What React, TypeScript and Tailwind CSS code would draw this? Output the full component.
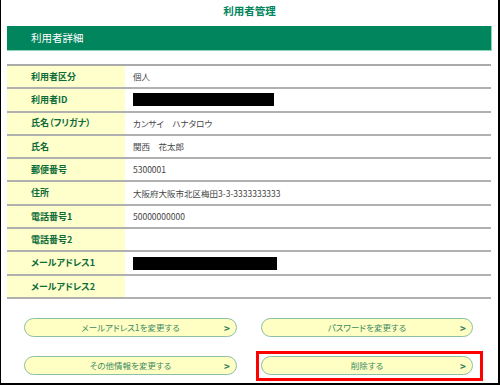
import React from "react";

type Row = { label: string; value?: string; redact?: number };

const rows: Row[] = [
  { label: "利用者区分", value: "個人" },
  { label: "利用者ID", redact: 141 },
  { label: "氏名（フリガナ）", value: "カンサイ　ハナタロウ" },
  { label: "氏名", value: "関西　花太郎" },
  { label: "郵便番号", value: "5300001" },
  { label: "住所", value: "大阪府大阪市北区梅田3-3-3333333333" },
  { label: "電話番号1", value: "50000000000" },
  { label: "電話番号2" },
  { label: "メールアドレス1", redact: 144 },
  { label: "メールアドレス2" },
];

export default function App() {
  return (
    <div
      className="w-[500px] h-[385px] bg-white border-l border-r-2 border-b-2 border-black overflow-hidden [font-feature-settings:'palt']"
      style={{ fontFamily: '"Noto Sans CJK JP", "Noto Sans", sans-serif' }}
    >
      {/* Page title */}
      <div className="h-[22px] flex items-center justify-center text-[10.5px] font-bold text-[#00855c]">
        利用者管理
      </div>

      {/* Section header */}
      <div className="ml-[6px] mt-[4px] w-[485px] h-[25px] bg-[#00855c] border-r border-b border-[#8fd3bb] flex items-center pl-[24px] text-[10.5px] text-white">
        利用者詳細
      </div>

      {/* Detail table */}
      <div className="ml-[6px] mt-[13px] w-[484px] border-t-2 border-[#aaa]">
        {rows.map((r) => (
          <div key={r.label} className="flex h-[23.3px] border-b-2 border-[#b0b0b0]">
            <div className="w-[118px] bg-[#ffffcc] flex items-center pl-[24px] text-[9px] font-bold text-[#0b6b3a]">
              {r.label}
            </div>
            <div className="flex-1 flex items-center pl-[8px] text-[8.5px] text-[#444]">
              {r.redact ? (
                <div className="h-[13px] bg-black" style={{ width: r.redact }} />
              ) : (
                r.value
              )}
            </div>
          </div>
        ))}
      </div>

      {/* Action buttons */}
      <div className="ml-[23px] mt-[19px] grid grid-cols-[213px_212px] gap-x-[24px] gap-y-[19px]">
        <PillButton label="メールアドレス1を変更する" />
        <PillButton label="パスワードを変更する" />
        <PillButton label="その他情報を変更する" />
        <div className="relative">
          <PillButton label="削除する" />
          <div className="absolute -left-[5px] -right-[10px] -top-[5px] -bottom-[6px] border-[3px] border-[#ff0000]" />
        </div>
      </div>
    </div>
  );
}

function PillButton({ label }: { label: string }) {
  return (
    <button className="relative w-full h-[19px] rounded-full bg-[#ffffc4] border border-[#8cbfa3] flex items-center justify-center text-[8.5px] text-[#3d8a63]">
      <span>{label}</span>
      <span className="absolute right-[6px] top-1/2 -translate-y-1/2 text-[10px] font-semibold text-[#2e7d5a]">&gt;</span>
    </button>
  );
}
